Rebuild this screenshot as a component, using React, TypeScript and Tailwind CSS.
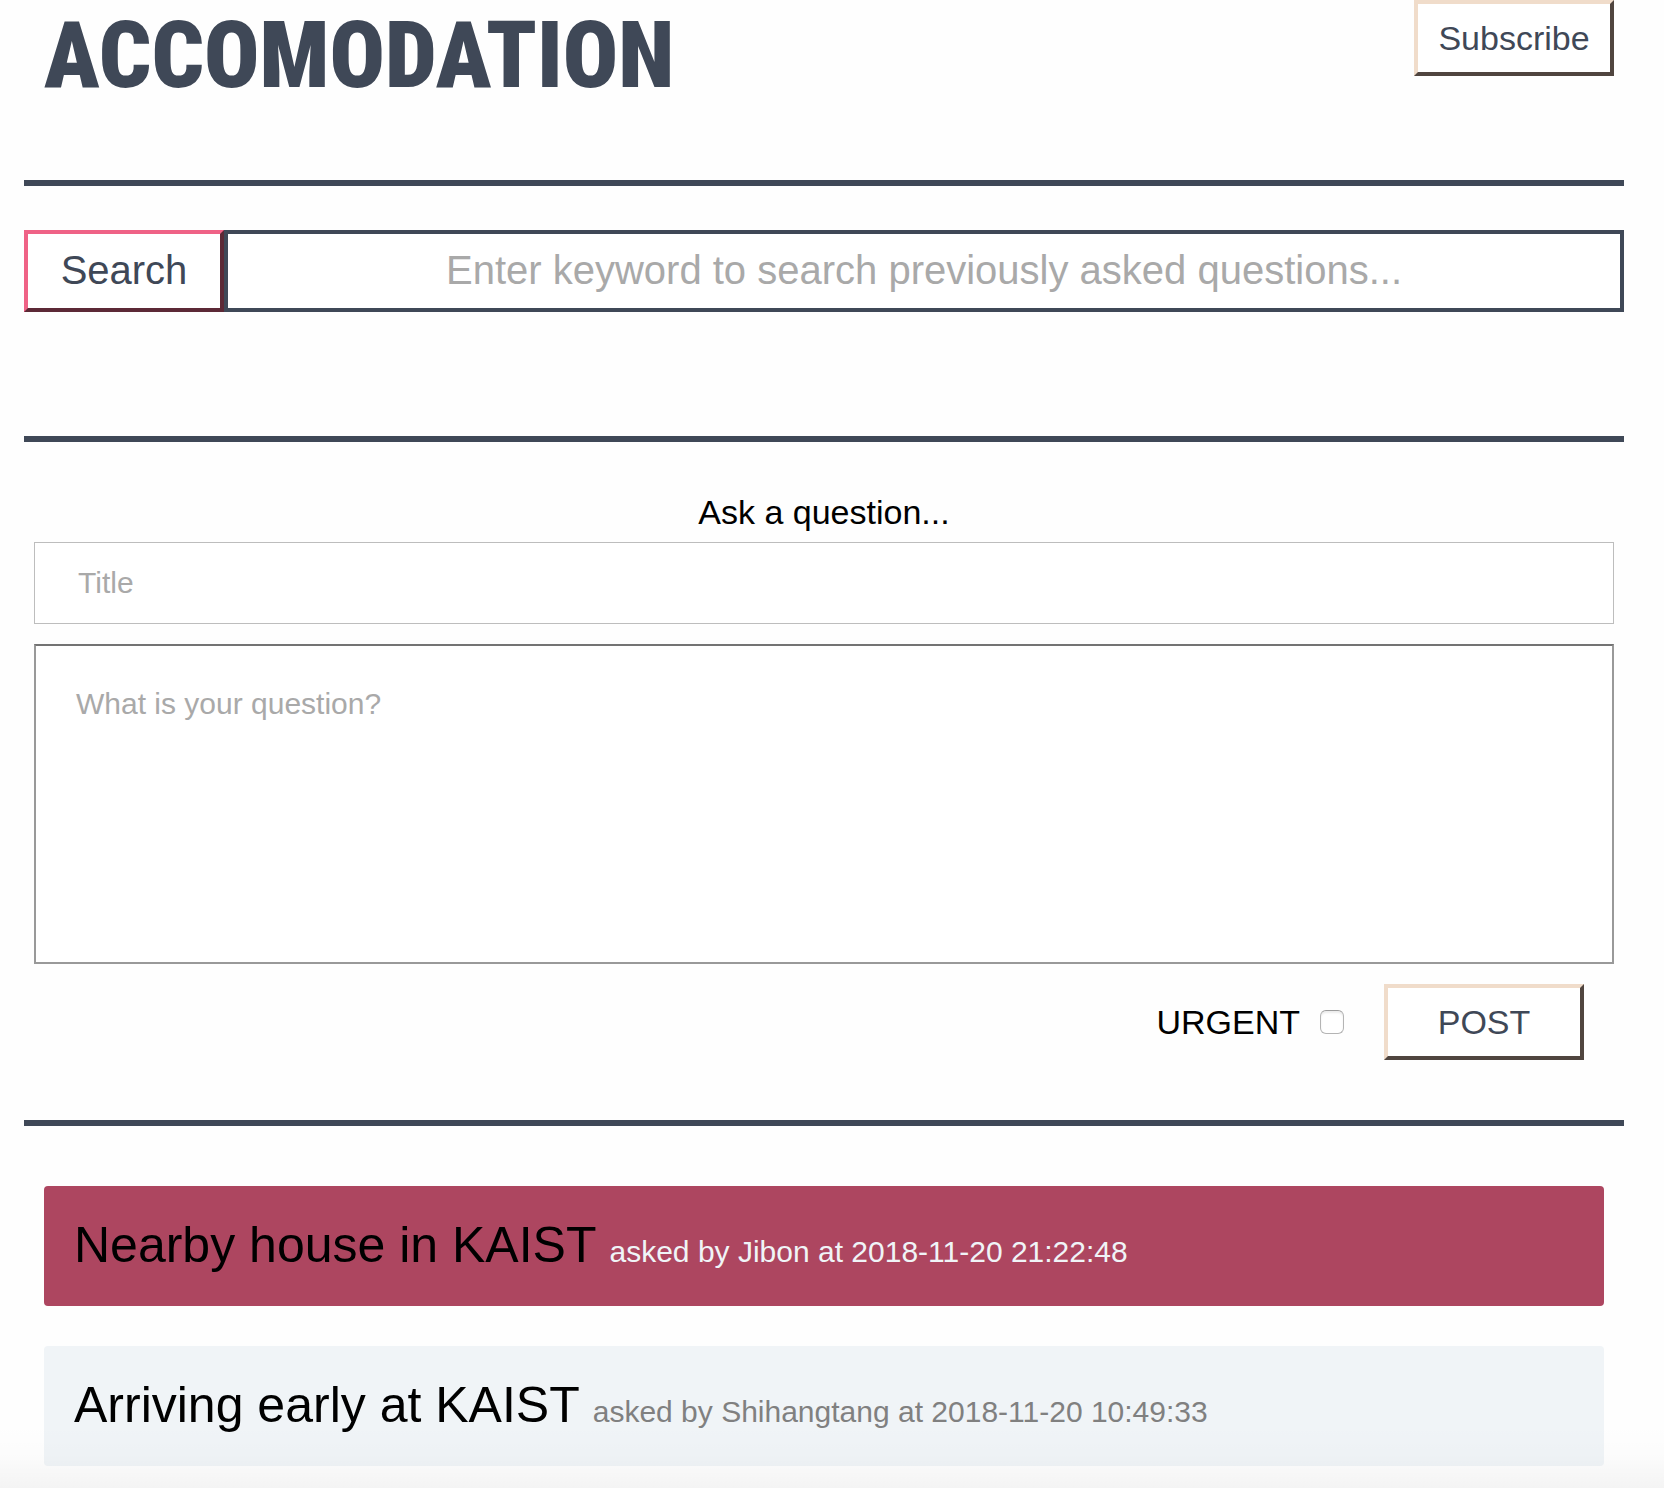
import React from "react";

const questions = [
  {
    title: "Nearby house in KAIST",
    author: "Jibon",
    time: "2018-11-20 21:22:48",
    urgent: true,
  },
  {
    title: "Arriving early at KAIST",
    author: "Shihangtang",
    time: "2018-11-20 10:49:33",
    urgent: false,
  },
];

function Divider() {
  return <hr className="h-1.5 border-0 bg-[#3f4857]" />;
}

const peachButton =
  "h-19 w-50 border-4 border-t-[#f0dcca] border-l-[#f0dcca] border-r-[#50453f] border-b-[#50453f] bg-white text-[34px] leading-10 text-[#3f4857]";

export default function App() {
  return (
    <div className="relative min-h-screen bg-[#fefefe] pr-10 pl-6 pb-[22px] font-['Liberation_Sans',Arial,sans-serif] text-black">
      <header className="flex h-45 items-start justify-between pr-2.5 pl-5">
        <h1 className="pt-2 font-['Roboto_Condensed','Liberation_Sans',sans-serif] text-[92px] leading-24 font-black text-[#3f4857]">
          ACCOMODATION
        </h1>
        <button type="button" className={peachButton}>
          Subscribe
        </button>
      </header>

      <Divider />

      <form className="mt-11 mb-31 flex" onSubmit={(e) => e.preventDefault()}>
        <button
          type="submit"
          className="h-[82px] w-50 shrink-0 border-4 border-t-[#ef6286] border-l-[#ef6286] border-r-[#5c2936] border-b-[#5c2936] bg-white pb-0.5 text-[40px] leading-12 text-[#3f4857]"
        >
          Search
        </button>
        <input
          type="text"
          aria-label="Search questions"
          placeholder="Enter keyword to search previously asked questions..."
          className="h-[82px] min-w-0 flex-1 border-4 border-[#3f4857] bg-white pb-0.5 text-center text-[40px] placeholder:text-[#a9a9a9]"
        />
      </form>

      <Divider />

      <form className="px-2.5 pt-12.5 pb-15" onSubmit={(e) => e.preventDefault()}>
        <h2 className="mb-2.5 text-center text-[34px] leading-10">Ask a question...</h2>
        <input
          type="text"
          aria-label="Title"
          placeholder="Title"
          className="block h-[82px] w-full border border-[#bdbdbd] bg-white px-[43px] text-[30px] placeholder:text-[#a9a9a9]"
        />
        <textarea
          aria-label="Question"
          placeholder="What is your question?"
          className="mt-5 block h-80 w-full resize-none border-2 border-[#999999] border-t-[#737373] bg-white p-10 text-[30px] leading-9 placeholder:text-[#a9a9a9]"
        />
        <div className="mt-5 flex items-center justify-end pr-7.5">
          <label htmlFor="urgent" className="text-[34px] leading-10">
            URGENT
          </label>
          <input
            id="urgent"
            type="checkbox"
            className="mr-10 ml-5 size-6 appearance-none rounded-md border border-[#b4b4b4] border-t-[#9c9c9c] bg-white shadow-[inset_0_2px_2px_#ececec] checked:bg-[#3f4857]"
          />
          <button type="submit" className={peachButton}>
            POST
          </button>
        </div>
      </form>

      <Divider />

      <ul className="flex flex-col gap-10 px-5 pt-15">
        {questions.map((q) => (
          <li
            key={q.title}
            className={
              q.urgent
                ? "h-30 rounded bg-[#ad4660] px-7.5 pt-[29px] text-[#f0f4f7]"
                : "h-30 rounded bg-[#f0f4f7] px-7.5 pt-[29px] text-[#808080]"
            }
          >
            <p className="text-[30px] leading-15">
              <a href="#question" className="text-[50px] text-black">
                {q.title}{" "}
              </a>
              asked by {q.author} at {q.time}
            </p>
          </li>
        ))}
      </ul>

      <div className="pointer-events-none absolute inset-x-0 bottom-0 h-16 bg-linear-to-t from-black/4 via-black/1 to-transparent" />
    </div>
  );
}
